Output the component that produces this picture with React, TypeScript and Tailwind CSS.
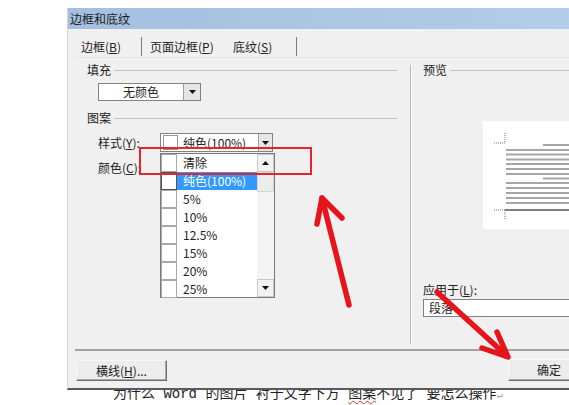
import React from "react";

function DownArrow() {
  return (
    <svg width="7" height="4" viewBox="0 0 7 4">
      <polygon points="0,0 7,0 3.5,4" fill="#111" />
    </svg>
  );
}

function UpArrow() {
  return (
    <svg width="7" height="4" viewBox="0 0 7 4">
      <polygon points="0,4 7,4 3.5,0" fill="#111" />
    </svg>
  );
}

function Heading({ label, right = 13 }: { label: string; right?: number }) {
  return (
    <div className="flex h-[14px] items-center">
      <span className="leading-[14px]">{label}</span>
      <div className={`ml-[3px] h-px flex-1 bg-[#c4c4c4] ${right ? "mr-[13px]" : ""}`} />
    </div>
  );
}

const listRows = ["清除", "纯色(100%)", "5%", "10%", "12.5%", "15%", "20%", "25%"];

function PreviewDrawing() {
  const grey = [24, 29, 33.5, 38.5, 43, 48, 53, 57.5, 62, 67, 72, 77, 82];
  const shortRows = [24, 57.5];
  return (
    <svg width="100" height="108" viewBox="0 0 100 108">
      <line x1="11" y1="22" x2="22" y2="22" stroke="#777" strokeWidth="1" strokeDasharray="1 1" />
      <line x1="22" y1="12" x2="22" y2="22" stroke="#777" strokeWidth="1" strokeDasharray="1 1" />
      {grey.map((y) => (
        <line key={y} x1={shortRows.includes(y) ? 60 : 23} y1={y} x2="100" y2={y} stroke="#a6a6a6" strokeWidth="2" />
      ))}
      <line x1="22" y1="89" x2="100" y2="89" stroke="#555" strokeWidth="1.5" />
      <line x1="11" y1="89" x2="22" y2="89" stroke="#777" strokeWidth="1" strokeDasharray="1 1" />
      <line x1="22" y1="89" x2="22" y2="99" stroke="#777" strokeWidth="1" strokeDasharray="1 1" />
    </svg>
  );
}

export default function App() {
  return (
    <div className="relative h-[405px] w-[569px] overflow-hidden bg-white font-['Noto_Sans_CJK_SC',sans-serif] text-[12px] text-[#222]">
      {/* dialog */}
      <div className="relative z-10 ml-[67px] mt-[8px] flex h-[382px] w-[520px] flex-col border-b-2 border-l border-b-[#5a5a5a] border-l-[#d4d4d4] bg-[#f0f0f0]">
        <div className="h-[21px] bg-gradient-to-r from-[#a4c0de] to-[#b4cde8] pl-[2px] text-[12px] leading-[21px] text-[#1a1a1a]">
          边框和底纹
        </div>

        {/* tabs */}
        <div className="flex h-[28px] items-end pb-px">
          <span className="ml-[13px] w-[48px] leading-[19px]">
            边框(<u className="underline-offset-1">B</u>)
          </span>
          <div className="ml-[12px] h-[19px] w-px bg-[#7c7c7c]" />
          <span className="ml-[8px] w-[67px] leading-[19px]">
            页面边框(<u className="underline-offset-1">P</u>)
          </span>
          <span className="ml-[16px] w-[49px] leading-[19px]">
            底纹(<u className="underline-offset-1">S</u>)
          </span>
          <div className="ml-[14px] h-[19px] w-px bg-[#7c7c7c]" />
        </div>

        {/* body */}
        <div className="ml-[7px] flex h-[294px] border-b-2 border-t border-b-[#a2a2a2] border-t-[#e2e2e2]">
          <div className="flex w-[335px] flex-col pl-[12px]">
            <div className="mt-[5px]">
              <Heading label="填充" />
            </div>
            <div className="ml-[11px] mt-[6px] flex h-[18px] w-[103px] border border-[#828282] bg-white">
              <div className="flex-1 text-center leading-[16px]">无颜色</div>
              <div className="flex w-[17px] items-center justify-center border-l border-[#9c9c9c] bg-[#e6e6e6]">
                <DownArrow />
              </div>
            </div>
            <div className="mt-[10px]">
              <Heading label="图案" />
            </div>
            <div className="mt-[8px] flex h-[19px] items-center">
              <span className="ml-[11px] w-[62px]">
                样式(<u className="underline-offset-1">Y</u>):
              </span>
              <div className="flex h-[19px] w-[113px] items-center border border-[#828282] bg-white">
                <div className="ml-[2px] h-[15px] w-[15px] border border-[#999]" />
                <span className="ml-[5px] flex-1 leading-[17px]">纯色(100%)</span>
                <div className="flex h-full w-[14px] items-center justify-center border-l border-[#9c9c9c] bg-[#e6e6e6]">
                  <DownArrow />
                </div>
              </div>
            </div>
            <div className="mt-[6px] flex h-[19px] items-center">
              <span className="ml-[11px] w-[62px]">
                颜色(<u className="underline-offset-1">C</u>):
              </span>
            </div>
          </div>

          <div className="mb-[5px] mt-[7px] w-[2px] border-l border-r border-l-[#b4b4b4] border-r-white" />

          <div className="flex flex-1 flex-col pl-[11px]">
            <div className="mt-[5px]">
              <Heading label="预览" right={0} />
            </div>
            <div className="ml-[60px] mt-[44px] h-[108px] bg-white">
              <PreviewDrawing />
            </div>
            <div className="mt-[54px] h-[14px] leading-[14px]">
              应用于(<u className="underline-offset-1">L</u>):
            </div>
            <div className="mt-[2px] h-[18px] border border-[#828282] bg-white pl-[5px] leading-[16px]">段落</div>
          </div>
        </div>

        {/* buttons */}
        <div className="flex h-[37px] items-start">
          <button className="ml-[8px] mt-[9px] h-[21px] w-[91px] border border-b-[#6f6f6f] border-l-[#f8f8f8] border-r-[#6f6f6f] border-t-[#f8f8f8] bg-[#ececec] text-[12px] leading-[19px] shadow-[inset_-1px_-1px_0_#a8a8a8]">
            横线(<u className="underline-offset-1">H</u>)...
          </button>
          <button className="ml-[341px] mt-[8px] h-[22px] w-[70px] border border-b-[#6f6f6f] border-l-[#f8f8f8] border-r-[#6f6f6f] border-t-[#f8f8f8] bg-[#ececec] pr-[16px] text-right text-[12px] leading-[20px] shadow-[inset_-1px_-1px_0_#a8a8a8]">
            确定
          </button>
        </div>
      </div>

      {/* caption text under the dialog */}
      <div className="-mt-[5px] ml-[113px] whitespace-nowrap font-['Liberation_Mono','Noto_Sans_CJK_SC',monospace] text-[14px] leading-[18px] text-[#222]">
        为什么 word 的图片 衬于文字下方{" "}
        <span className="underline decoration-[#d33] decoration-wavy decoration-1 underline-offset-2">图案</span>不见了 要怎么操作
        <span className="text-[10px] text-[#999]">↵</span>
      </div>

      {/* opened list */}
      <div className="absolute left-[160px] top-[153px] z-20 flex h-[145px] w-[115px] border border-[#7a7a7a] bg-white">
        <div className="flex flex-1 flex-col">
          {listRows.map((r, i) => (
            <div key={r} className="flex h-[18px] items-stretch">
              <div className={`w-[16px] border ${i === 1 ? "border-[#555]" : "border-[#a8a8a8]"} bg-white`} />
              <div
                className={`flex flex-1 items-center pl-[6px] ${i === 1 ? "bg-[#3399ff] text-white" : ""}`}
              >
                {r}
              </div>
            </div>
          ))}
        </div>
        <div className="flex w-[17px] flex-col bg-[#f4f4f4]">
          <div className="flex h-[18px] items-center justify-center border border-[#c8c8c8] bg-[#f2f2f2]">
            <UpArrow />
          </div>
          <div className="h-[20px] border border-[#d6d6d6] bg-[#ececec]" />
          <div className="flex-1" />
          <div className="flex h-[18px] items-center justify-center border border-[#c8c8c8] bg-[#f2f2f2]">
            <DownArrow />
          </div>
        </div>
      </div>

      {/* annotations */}
      <div className="absolute left-[139px] top-[147px] z-30 h-[28px] w-[173px] border-2 border-[#e3262b]" />
      <svg className="pointer-events-none absolute left-0 top-0 z-40" width="569" height="405" viewBox="0 0 569 405">
        <g stroke="#e8141c" strokeWidth="5.5" strokeLinecap="round" strokeLinejoin="round" fill="none">
          <line x1="349" y1="305" x2="322" y2="198" />
          <polyline points="317,224 322,198 342,218" />
          <line x1="437" y1="292" x2="507" y2="356" />
          <polyline points="482,348 508,357 497,332" />
        </g>
      </svg>
    </div>
  );
}
